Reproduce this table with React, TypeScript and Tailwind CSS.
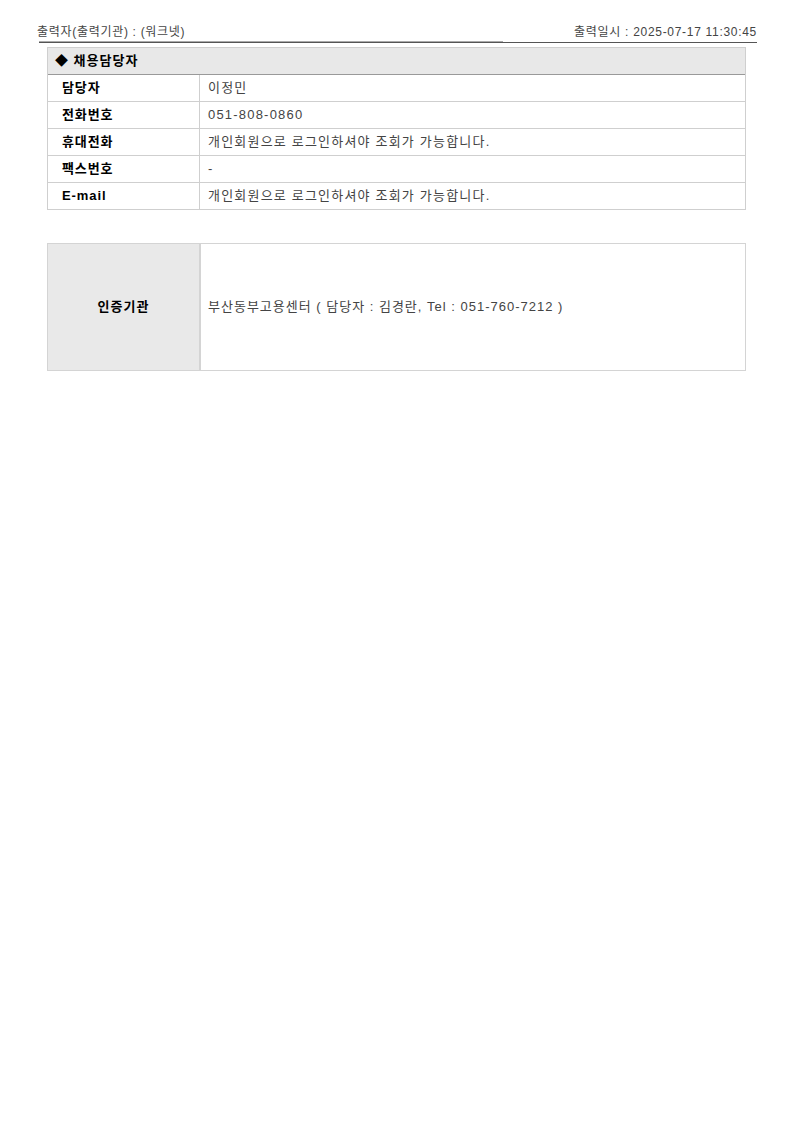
import React from "react";

const font = { fontFamily: '"Liberation Sans", "Noto Sans CJK KR", sans-serif' };

const rows: [string, string][] = [
  ["담당자", "이정민"],
  ["전화번호", "051-808-0860"],
  ["휴대전화", "개인회원으로 로그인하셔야 조회가 가능합니다."],
  ["팩스번호", "-"],
  ["E-mail", "개인회원으로 로그인하셔야 조회가 가능합니다."],
];

export default function App() {
  return (
    <div className="w-[793px] min-h-[1122px] bg-white pl-[37px] pr-[36px] pt-[22px]" style={font}>
      <div className="flex justify-between items-end h-[19px] text-[12px] text-[#444] leading-[18px] tracking-[0.7px]">
        <span>출력자(출력기관) : (워크넷)</span>
        <span>출력일시 : 2025-07-17 11:30:45</span>
      </div>
      <div className="ml-[2px]">
        <div className="w-[464px] h-px bg-[#aaa]" />
        <div className="h-px bg-[#555]" />
      </div>

      <div className="ml-[10px] w-[699px] mt-[4px] border-x border-t border-[#cfcfcf]">
        <div className="h-[27px] bg-[#e8e8e8] border-b border-[#999] flex items-center pl-[7px] text-[13px] font-bold text-black tracking-[1px]">
          ◆ 채용담당자
        </div>
        {rows.map(([k, v]) => (
          <div key={k} className="flex h-[27px] border-b border-[#cfcfcf]">
            <div className="w-[152px] border-r border-[#cfcfcf] flex items-center pl-[14px] text-[13px] font-bold text-black tracking-[0.9px]">
              {k}
            </div>
            <div className="flex-1 flex items-center pl-[8px] text-[13px] text-[#444] tracking-[1.2px]">{v}</div>
          </div>
        ))}
      </div>

      <div className="ml-[10px] w-[699px] mt-[33px] h-[128px] border border-[#d4d4d4] flex">
        <div className="w-[153px] bg-[#e9e9e9] border-r-2 border-[#d4d4d4] flex items-center justify-center text-[13px] font-bold text-black tracking-[1px]">
          인증기관
        </div>
        <div className="flex-1 flex items-center pl-[7px] text-[13px] text-[#444] tracking-[1px]">
          부산동부고용센터 ( 담당자 : 김경란, Tel : 051-760-7212 )
        </div>
      </div>
    </div>
  );
}
